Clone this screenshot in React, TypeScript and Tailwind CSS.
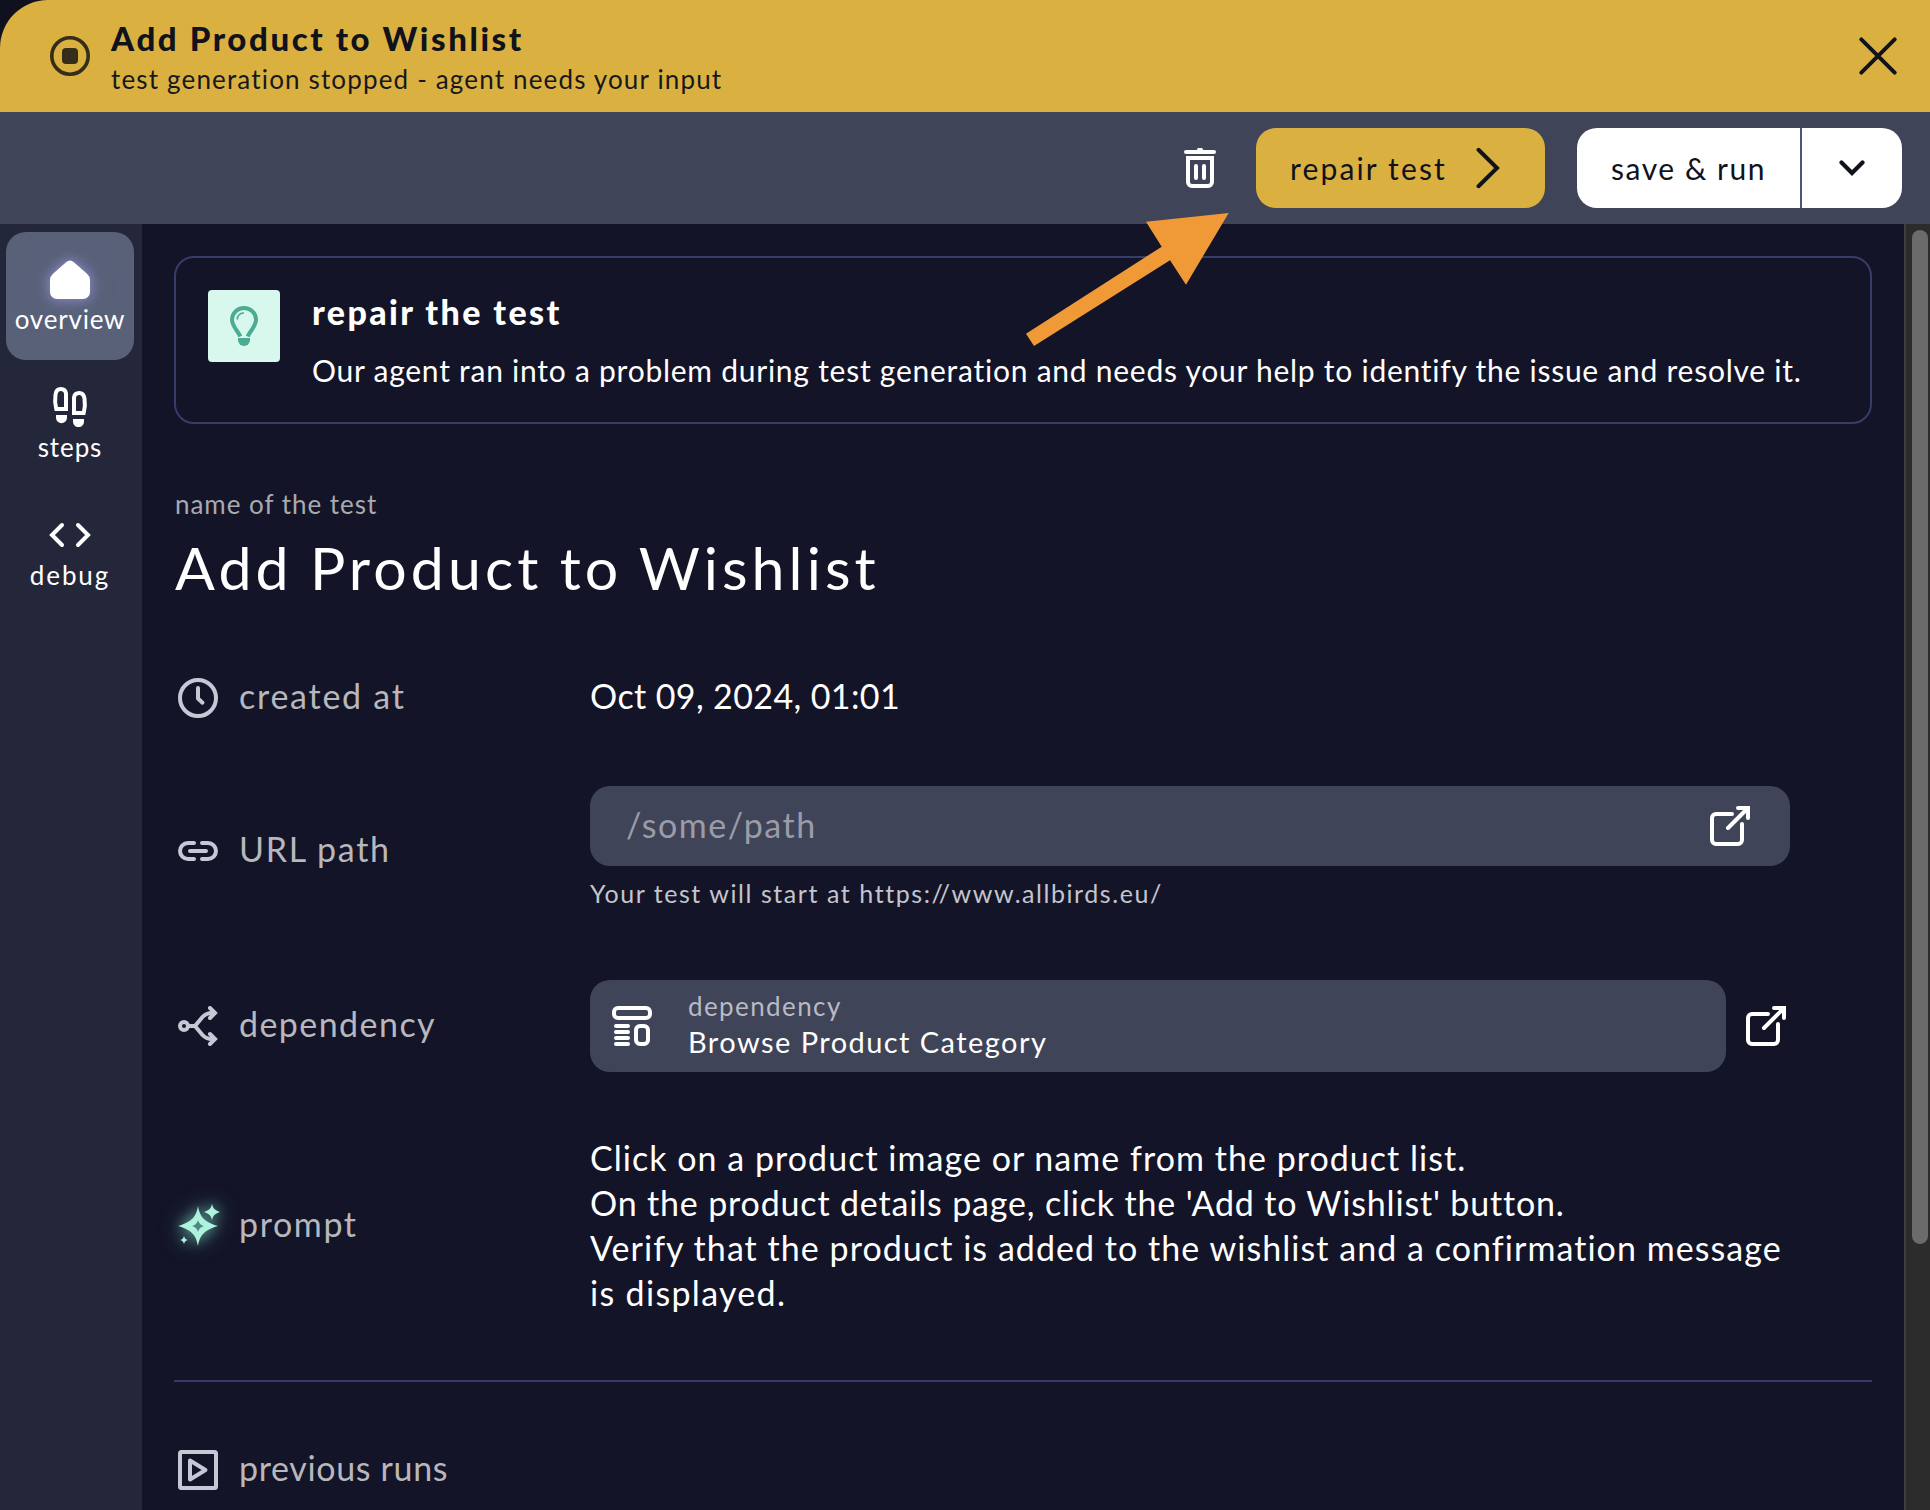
import React from 'react';

type IconProps = { className?: string };

function StopIcon() {
  return (
    <svg width="40" height="40" viewBox="0 0 40 40" className="block shrink-0">
      <circle cx="20" cy="20" r="18.2" fill="none" stroke="#352d1a" strokeWidth="3.6" />
      <rect x="12" y="12" width="16" height="16" rx="4" fill="#352d1a" />
    </svg>
  );
}

function CloseIcon() {
  return (
    <svg width="40" height="40" viewBox="0 0 40 40" fill="none" stroke="#10121e" strokeWidth="4" strokeLinecap="round">
      <path d="M3.300 3.300 36.700 36.700M36.700 3.300 3.300 36.700" />
    </svg>
  );
}

function TrashIcon() {
  return (
    <svg width="32" height="40" viewBox="0 0 32 40" fill="none" stroke="#fff" strokeWidth="4">
      <path d="M2 4h28" strokeLinecap="round" />
      <path d="M14.500 1.500h3" strokeWidth="3" strokeLinecap="round" />
      <path d="M4 10h24v24a4 4 0 0 1-4 4H8a4 4 0 0 1-4-4z" />
      <path d="M12 18v12M20 18v12" strokeLinecap="round" />
    </svg>
  );
}

function HomeIcon() {
  return (
    <svg
      width="40"
      height="40"
      viewBox="0 0 40 40"
      fill="#fff"
      className="overflow-visible [filter:drop-shadow(0_0_6px_#8c8cc4)_drop-shadow(0_0_8px_#696d97)]"
    >
      <path d="M15.800 3.400a6.500 6.500 0 0 1 8.400 0L37 14.800a8.500 8.500 0 0 1 3 6.400V33a7 7 0 0 1-7 7H7a7 7 0 0 1-7-7V21.200a8.500 8.500 0 0 1 3-6.400z" />
    </svg>
  );
}

function StepsIcon() {
  return (
    <svg width="40" height="40" viewBox="0 0 40 40" fill="none" stroke="#fff" strokeWidth="4">
      <path d="M6.300 22C5 17 4.800 12 5.500 7.500 6 4 8 2 10.800 2s4.800 1.800 5.200 4.500V22z" />
      <path d="M33.700 26c1.300-5 1.500-10 .8-14.500C34 8 32 6 29.200 6s-4.800 1.800-5.200 4.500V26z" />
      <path d="M6 28h11v2.700a5.500 5.500 0 0 1-11 0z" fill="#fff" stroke="none" />
      <path d="M23 32h11v2.700a5.500 5.500 0 0 1-11 0z" fill="#fff" stroke="none" />
    </svg>
  );
}

function CodeIcon() {
  return (
    <svg width="44" height="40" viewBox="0 0 44 40" fill="none" stroke="#fff" strokeWidth="4" strokeLinecap="round">
      <path d="M14 10 4 20l10 10M30 10l10 10-10 10" />
    </svg>
  );
}

function BulbIcon() {
  return (
    <svg width="28" height="40" viewBox="0 0 28 40" fill="none" stroke="#4bab93" strokeWidth="4">
      <path d="M10.300 30.500C8.500 25.500 2 20.500 2 13.800 2 7.200 7.400 2 14 2s12 5.200 12 11.800c0 6.700-6.500 11.700-8.300 16.700" />
      <path d="M7.300 13.500c0-3.800 2.700-6.500 6.500-6.700" strokeWidth="1.800" />
      <path d="M8 32h12v2a6 6 0 0 1-12 0z" fill="#4bab93" stroke="none" />
    </svg>
  );
}

function ClockIcon() {
  return (
    <svg width="40" height="40" viewBox="0 0 40 40" fill="none" stroke="#c6c9d5" strokeWidth="4" strokeLinecap="round" strokeLinejoin="round">
      <circle cx="20" cy="20" r="18" />
      <path d="M20 10v10.500l4.500 4.200" />
    </svg>
  );
}

function LinkIcon() {
  return (
    <svg width="40" height="40" viewBox="0 0 40 40" fill="none" stroke="#c6c9d5" strokeWidth="4" strokeLinecap="round">
      <path d="M16 12h-6a8 8 0 0 0 0 16h6M24 12h6a8 8 0 0 1 0 16h-6M12 20h16" />
    </svg>
  );
}

function BranchIcon() {
  return (
    <svg width="40" height="40" viewBox="0 0 40 40" fill="none" stroke="#c6c9d5" strokeWidth="4" strokeLinecap="round">
      <circle cx="6" cy="20" r="4" />
      <path d="M11 20h6l7.500-9C27 8.200 29 7 34 7M17 20l7.500 9C27 31.800 29 33 34 33" />
      <path d="M32 2l5 5-5 5M32 28l5 5-5 5" />
    </svg>
  );
}

function SparkleIcon() {
  return (
    <svg
      width="40"
      height="40"
      viewBox="0 0 40 40"
      fill="#adf3dd"
      className="overflow-visible [filter:drop-shadow(0_0_6px_#4f8580)_drop-shadow(0_0_9px_#44706f)]"
    >
      <path d="M20 0c1.800 9.500 4.500 15.500 20 20-15.500 4.500-18.200 10.500-20 20-1.800-9.500-4.500-15.500-20-20C15.500 15.500 18.200 9.500 20 0z" />
      <path
        fill="#4e8681"
        d="M20 14.200c-1.100 3.200-2.600 4.700-5.800 5.800 3.200 1.100 4.700 2.600 5.800 5.800 1.100-3.200 2.600-4.700 5.800-5.800-3.200-1.100-4.700-2.600-5.800-5.800z"
      />
      <path d="M34-2c1.200 4.500 2.500 6.200 8 8-5.500 1.800-6.800 3.500-8 8-1.200-4.500-2.500-6.200-8-8 5.500-1.800 6.800-3.500 8-8zM6 30c.8 2.500 1.500 3.200 4 4-2.500.8-3.200 1.500-4 4-.8-2.500-1.500-3.200-4-4 2.500-.8 3.200-1.500 4-4z" />
    </svg>
  );
}

function PlayBoxIcon() {
  return (
    <svg width="40" height="40" viewBox="0 0 40 40" fill="none" stroke="#c6c9d5" strokeWidth="4" strokeLinejoin="round">
      <rect x="2" y="2" width="36" height="36" rx="1.500" />
      <path d="M12 10.500 27.500 20 12 29.500z" />
    </svg>
  );
}

function ExternalIcon({ className = '' }: IconProps) {
  return (
    <svg width="40" height="40" viewBox="0 0 40 40" fill="none" stroke="#fff" strokeWidth="4" strokeLinecap="round" className={`shrink-0 ${className}`}>
      <path d="M22 8H6a4 4 0 0 0-4 4v22a4 4 0 0 0 4 4h22a4 4 0 0 0 4-4V18" />
      <path d="M18 22 38 2M28 2h10v10" />
    </svg>
  );
}

function TemplateIcon() {
  return (
    <svg width="40" height="40" viewBox="0 0 40 40" fill="none" stroke="#fff" strokeWidth="4" strokeLinecap="round" className="shrink-0">
      <rect x="2" y="2" width="36" height="10" rx="4" />
      <rect x="24" y="20" width="12" height="18" rx="4" />
      <path d="M4 20h12M4 26h12M4 32h12M4 38h12" />
    </svg>
  );
}

function NavItem({ icon, children, active = false }: { icon: React.ReactNode; children: React.ReactNode; active?: boolean }) {
  return (
    <button className={`flex h-32 w-32 flex-col items-center rounded-[20px] pt-[27px] text-[26px] leading-8 text-white ${active ? 'bg-[#586178]' : ''}`}>
      <span className="flex h-10 items-center">{icon}</span>
      <span className="mt-1">{children}</span>
    </button>
  );
}

function Label({ icon, children }: { icon: React.ReactNode; children: React.ReactNode }) {
  return (
    <div className="flex w-[416px] shrink-0 items-center gap-5 self-center pl-1 text-[34px] leading-10 text-[#b7b7bc]">
      {icon}
      <span className="pb-1 pl-px">{children}</span>
    </div>
  );
}

export default function App() {
  return (
    <div className='relative flex h-[1510px] w-[1930px] flex-col overflow-hidden whitespace-nowrap bg-[#10111f] font-["Lato",sans-serif]'>
      <header className="flex h-28 shrink-0 items-center rounded-tl-[48px] bg-[#dab141] pl-[50px] pr-8">
        <StopIcon />
        <div className="ml-[21px] grow">
          <div className="text-[33px] font-black leading-10 tracking-[2.58px] text-[#10121c]">Add Product to Wishlist</div>
          <div className="mt-[5px] text-[26px] leading-8 tracking-[1.16px] text-[#17181c]">test generation stopped - agent needs your input</div>
        </div>
        <CloseIcon />
      </header>

      <div className="flex h-28 shrink-0 items-center justify-end bg-[#404459] pr-7">
        <TrashIcon />
        <button className="ml-10 flex h-20 w-[289px] items-center justify-between rounded-[20px] bg-[#dab141] pl-[34px] pr-[45px] text-[30px] text-[#10121c]">
          <span className="tracking-[2.15px]">repair test</span>
          <svg width="24" height="42" viewBox="0 0 24 42" fill="none" stroke="#10121c" strokeWidth="4" strokeLinecap="round">
            <path d="M2.500 2.800 21 21 2.500 39.200" />
          </svg>
        </button>
        <div className="ml-8 flex h-20 w-[325px] overflow-hidden rounded-[20px] bg-white text-[30px] text-[#10121c]">
          <button className="flex w-[225px] items-center border-r-2 border-[#4d5478] pl-[34px]">
            <span className="tracking-[1.55px]">save &amp; run</span>
          </button>
          <button className="flex grow items-center justify-center">
            <svg width="26" height="16" viewBox="0 0 26 16" fill="none" stroke="#10121c" strokeWidth="4.200" strokeLinecap="round">
              <path d="M2.500 2.500 13 13 23.500 2.500" />
            </svg>
          </button>
        </div>
      </div>

      <div className="flex min-h-0 grow">
        <nav className="w-[142px] shrink-0 bg-[#24263a] pl-1.5 pt-2">
          <NavItem active icon={<HomeIcon />}>
            <span className="tracking-[0.8px]">overview</span>
          </NavItem>
          <NavItem icon={<StepsIcon />}>
            <span className="tracking-[0.9px]">steps</span>
          </NavItem>
          <NavItem icon={<CodeIcon />}>
            <span className="tracking-[1.9px]">debug</span>
          </NavItem>
        </nav>

        <main className="w-[1762px] shrink-0 bg-[#131428] pl-8 pr-8 pt-8 text-white">
          <section className="flex h-[168px] gap-8 rounded-[20px] border-2 border-[#383c68] px-8 pt-8">
            <div className="flex size-[72px] items-center justify-center rounded bg-[#d8f8ee]">
              <BulbIcon />
            </div>
            <div>
              <h2 className="mt-0.5 text-[34px] font-black leading-10 tracking-[2.4px]">repair the test</h2>
              <p className="mt-[18px] text-[30px] leading-10 tracking-[0.75px]">
                Our agent ran into a problem during test generation and needs your help to identify the issue and resolve it.
              </p>
            </div>
          </section>

          <div className="mt-16 pl-px text-[26px] leading-8 tracking-[0.97px] text-[#a9a9b0]">name of the test</div>
          <h1 className="mt-3 pl-px text-[59px] leading-[72px] tracking-[4.100px] [word-spacing:-2px]">Add Product to Wishlist</h1>

          <div className="mt-16 flex h-[60px]">
            <Label icon={<ClockIcon />}>
              <span className="tracking-[1.75px]">created at</span>
            </Label>
            <span className="self-center pb-1 text-[34px] leading-10 tracking-[0.39px]">Oct 09, 2024, 01:01</span>
          </div>

          <div className="mt-[58px] flex h-[130px]">
            <Label icon={<LinkIcon />}>
              <span className="tracking-[1.66px]">URL path</span>
            </Label>
            <div>
              <div className="flex h-20 w-[1200px] items-center justify-between rounded-[20px] bg-[#404459] pl-9 pr-10">
                <span className="pb-0.5 text-[34px] leading-10 tracking-[1.55px] text-[#9a9ca8]">/some/path</span>
                <ExternalIcon />
              </div>
              <div className="mt-[11px] text-[25px] leading-8 tracking-[1.56px] text-[#c4c5cc]">Your test will start at https://www.allbirds.eu/</div>
            </div>
          </div>

          <div className="mt-16 flex h-[92px] items-center">
            <Label icon={<BranchIcon />}>
              <span className="tracking-[1.43px]">dependency</span>
            </Label>
            <div className="flex h-[92px] w-[1136px] items-center gap-9 rounded-[20px] bg-[#404459] pl-[22px]">
              <TemplateIcon />
              <div className="pb-[5px]">
                <div className="text-[26px] leading-9 tracking-[1.4px] text-[#b9bac3]">dependency</div>
                <div className="text-[29px] leading-9 tracking-[1.44px]">Browse Product Category</div>
              </div>
            </div>
            <ExternalIcon className="ml-5" />
          </div>

          <div className="mt-[62px] flex h-[184px]">
            <Label icon={<SparkleIcon />}>
              <span className="tracking-[1.6px]">prompt</span>
            </Label>
            <div className="pt-px text-[34px] leading-[45px]">
              <p className="tracking-[1.03px]">Click on a product image or name from the product list.</p>
              <p className="tracking-[0.83px]">On the product details page, click the 'Add to Wishlist' button.</p>
              <p className="tracking-[1.05px]">Verify that the product is added to the wishlist and a confirmation message</p>
              <p className="tracking-[1.32px]">is displayed.</p>
            </div>
          </div>

          <hr className="mt-[62px] border-t-2 border-[#383b66]" />

          <div className="mt-[58px] flex h-[60px]">
            <Label icon={<PlayBoxIcon />}>
              <span className="tracking-[0.65px]">previous runs</span>
            </Label>
          </div>
        </main>

        <div className="grow border-l-2 border-[#3e3e3e] bg-[#2c2c2c] pl-1.5 pt-1.5">
          <div className="h-[1014px] w-4 rounded-full bg-[#6b6b6b]" />
        </div>
      </div>

      <svg width="204" height="134" viewBox="0 0 204 134" className="absolute left-[1025px] top-[212px]">
        <path d="M203.700 1 161 72.700l-16-24.500L9 134 1 121.700 136.700 34.700 121 9.700z" fill="#f09937" />
      </svg>
    </div>
  );
}
